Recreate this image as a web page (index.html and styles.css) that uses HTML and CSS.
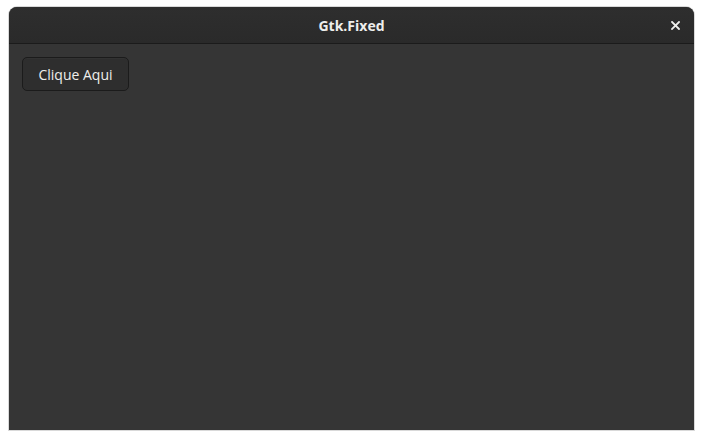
FILE: index.html
```html
<!DOCTYPE html>
<html>
<head>
<meta charset="utf-8">
<link rel="stylesheet" href="styles.css">
</head>
<body>
<div class="window">
  <div class="headerbar">
    <div class="title">Gtk.Fixed</div>
    <div class="close">
      <svg width="9" height="9" viewBox="0 0 9 9"><path d="M1 1 L8 8 M8 1 L1 8" stroke="#eeeeec" stroke-width="1.8" stroke-linecap="square"/></svg>
    </div>
  </div>
  <div class="content">
    <button class="btn">Clique Aqui</button>
  </div>
</div>
</body>
</html>
```
FILE: styles.css
```css
html, body { margin: 0; padding: 0; background: #ffffff; }
body { width: 703px; height: 439px; overflow: hidden; }
.window {
  margin: 7px 0 0 9px;
  width: 685px;
  height: 423px;
  background: #353535;
  border-radius: 8px 8px 0 0;
  overflow: hidden;
  display: flex;
  flex-direction: column;
  box-shadow: 0 0 0 1px rgba(0,0,0,0.15);
}
.headerbar {
  height: 36px;
  background: linear-gradient(#2e2e2e, #2a2a2a);
  border-bottom: 1px solid #1b1b1b;
  display: flex;
  align-items: center;
  justify-content: center;
  position: relative;
}
.title {
  font-family: "Open Sans", "Noto Sans", sans-serif;
  font-weight: 700;
  font-size: 14px;
  color: #eeeeec;
  margin-top: 1px;
}
.close {
  position: absolute;
  right: 14px;
  top: 14px;
  width: 9px;
  height: 9px;
  display: flex;
}
.content {
  flex: 1;
  padding: 13px 0 0 13px;
}
.btn {
  width: 107px;
  height: 34px;
  background: #2e2e2e;
  border: 1px solid #1b1b1b;
  border-radius: 5px;
  color: #eeeeec;
  font-family: "Open Sans", "Noto Sans", sans-serif;
  font-size: 14px;
  padding: 0;
  box-shadow: inset 0 1px rgba(255,255,255,0.02);
}
```
